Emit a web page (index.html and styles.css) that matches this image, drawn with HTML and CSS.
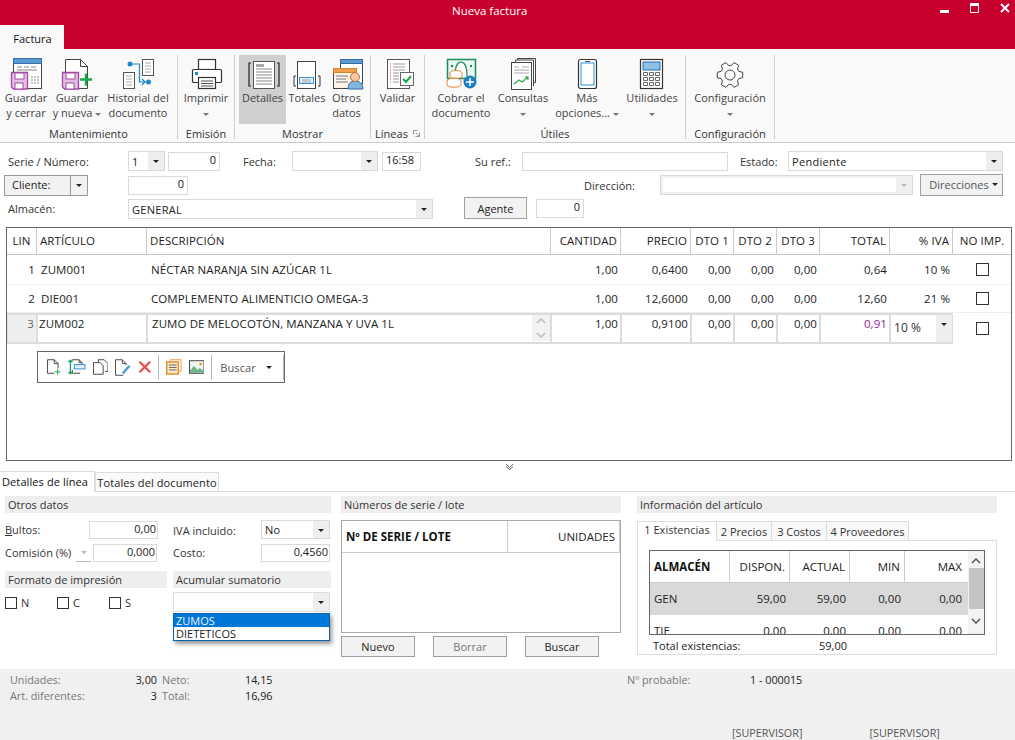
FILE: index.html
```html
<!DOCTYPE html>
<html lang="es">
<head>
<meta charset="utf-8">
<title>Nueva factura</title>
<link rel="stylesheet" href="styles.css">
</head>
<body>
<div class="app">
  <header class="titlebar">
    <span class="wintitle">Nueva factura</span>
    <div class="winctl">
      <svg width="10" height="10" viewBox="0 0 10 10"><rect x="0" y="7" width="9" height="3" fill="#fff"/></svg>
      <svg width="10" height="10" viewBox="0 0 10 10"><path d="M.5.500h8v9h-8z" fill="none" stroke="#fff"/><rect x="0" y="0" width="9" height="3" fill="#fff"/></svg>
      <svg width="10" height="10" viewBox="0 0 10 10"><path d="M1 1l8 8M9 1l-8 8" stroke="#fff" stroke-width="2"/></svg>
    </div>
  </header>
  <div class="tabstrip"><div class="apptab">Factura</div></div>

  <div class="ribbon">
    <section class="group g1">
      <div class="btns">
        <div class="rb w52">
          <svg class="ic" viewBox="0 0 34 34"><rect x="4.500" y="1.500" width="28" height="30" fill="#fff" stroke="#444"/><rect x="4.500" y="1.500" width="28" height="5" fill="#5b9bd5" stroke="#3a6ea5"/><path d="M8 10h5m2 0h5m2 0h5M8 13h20" stroke="#888"/><path d="M22 20h8m-8 3h8m-8 3h8" stroke="#888" stroke-dasharray="2 1"/><path d="M2.500 15.500h16v16.500h-14l-2-2z" fill="#e3bfe0" stroke="#a24aa5" stroke-width="1.300"/><rect x="6" y="16" width="9" height="6" fill="#fff" stroke="#a24aa5"/><rect x="6" y="26" width="8" height="6" fill="#fff" stroke="#a24aa5"/></svg>
          <span class="lb">Guardar<br>y cerrar</span>
        </div>
        <div class="rb w50">
          <svg class="ic" viewBox="0 0 34 34"><path d="M5.500 2.500h15l7 7v22h-22z" fill="#fff" stroke="#444"/><path d="M20.500 2.500v7h7" fill="none" stroke="#444"/><path d="M2.500 15.500h16v16.500h-14l-2-2z" fill="#e3bfe0" stroke="#a24aa5" stroke-width="1.300"/><rect x="6" y="16" width="9" height="6" fill="#fff" stroke="#a24aa5"/><rect x="6" y="26" width="8" height="6" fill="#fff" stroke="#a24aa5"/><path d="M26 16.500v12M20 22.500h12" stroke="#1aa84f" stroke-width="2.500"/></svg>
          <span class="lb">Guardar<br>y nueva <i class="arr"></i></span>
        </div>
        <div class="rb w72">
          <svg class="ic" viewBox="0 0 34 34"><rect x="21.500" y="2.500" width="11" height="16" fill="#fff" stroke="#555"/><path d="M24 6h6m-6 3h6m-6 3h6m-6 3h6" stroke="#aaa"/><rect x="2.500" y="15.500" width="11" height="16" fill="#fff" stroke="#555"/><path d="M5 19h6m-6 3h6m-6 3h6m-6 3h6" stroke="#aaa"/><circle cx="9" cy="7" r="2.500" fill="#1c87c9"/><path d="M9 7h9.500v18h9M21 22l3 3-3 3" fill="none" stroke="#1c87c9" stroke-width="1.200"/><circle cx="27.500" cy="25" r="2.500" fill="#1c87c9"/></svg>
          <span class="lb">Historial del<br>documento</span>
        </div>
      </div>
      <div class="gl">Mantenimiento</div>
    </section>
    <section class="group g2">
      <div class="btns">
        <div class="rb w55">
          <svg class="ic" viewBox="0 0 34 34"><rect x="9.500" y="2.500" width="17" height="10" fill="#fff" stroke="#333" stroke-width="1.200"/><rect x="3.500" y="12.500" width="29" height="13" rx="1" fill="#fff" stroke="#333" stroke-width="1.200"/><rect x="6" y="15" width="3" height="3" fill="#1c87c9"/><rect x="9.500" y="20.500" width="17" height="11" fill="#fff" stroke="#333" stroke-width="1.200"/><path d="M12 24h12m-12 2.500h12m-12 2.500h12" stroke="#555"/></svg>
          <span class="lb">Imprimir<br><i class="arr"></i></span>
        </div>
      </div>
      <div class="gl">Emisión</div>
    </section>
    <section class="group g3">
      <div class="btns">
        <div class="rb w47 on">
          <svg class="ic" viewBox="0 0 34 34"><rect x="7.500" y="4.500" width="21" height="27" fill="#fff" stroke="#555"/><rect x="10" y="7" width="8" height="3" fill="#aaa"/><path d="M10 12h16m-16 3h16m-16 3h16m-16 3h16m-16 3h16m-16 3h16" stroke="#888"/><path d="M5 6H3v23h2M31 6h2v23h-2" fill="none" stroke="#222" stroke-width="1.200"/></svg>
          <span class="lb">Detalles</span>
        </div>
        <div class="rb w42">
          <svg class="ic" viewBox="0 0 34 34"><rect x="7.500" y="4.500" width="18" height="27" fill="#fff" stroke="#444"/><rect x="9.500" y="20.500" width="14" height="6" fill="#e3f0fa" stroke="#3a94d0"/><path d="M12 23h9m-9 2h9" stroke="#888" stroke-width=".7"/><path d="M6 19H4v10h2M28 19h2v10h-2" fill="none" stroke="#333"/></svg>
          <span class="lb">Totales</span>
        </div>
        <div class="rb w37">
          <svg class="ic" viewBox="0 0 34 34"><rect x="10.500" y="2.500" width="22" height="24" fill="#fff" stroke="#444"/><rect x="10.500" y="2.500" width="22" height="4" fill="#5b9bd5" stroke="#3a6ea5"/><rect x="3.500" y="11.500" width="23" height="20" fill="#fdf3e6" stroke="#444"/><rect x="3.500" y="11.500" width="23" height="4" fill="#f0a04b" stroke="#d98430"/><path d="M6 19h12M6 22h10M6 25h12" stroke="#777"/><path d="M18 32c0-6 3-8 7-8s8 2 8 8z" fill="#7fb5de" stroke="#3a6ea5"/><circle cx="25" cy="20" r="4.500" fill="#f6c6a0" stroke="#b5733e"/></svg>
          <span class="lb">Otros<br>datos</span>
        </div>
      </div>
      <div class="gl">Mostrar</div>
    </section>
    <section class="group g4">
      <div class="btns">
        <div class="rb w53">
          <svg class="ic" viewBox="0 0 34 34"><rect x="6.500" y="2.500" width="22" height="29" fill="#fff" stroke="#555"/><path d="M12 7h12m-12 3h12m-12 3h12m-12 3h6m-6 3h6m-6 3h6m-6 3h6" stroke="#999"/><path d="M9 7h1m-1 3h1m-1 3h1m-1 3h1m-1 3h1m-1 3h1m-1 3h1" stroke="#c33"/><rect x="19.500" y="15.500" width="13" height="13" fill="#fff" stroke="#666"/><path d="M22 22l3 3 5-6" fill="none" stroke="#1aa84f" stroke-width="2"/></svg>
          <span class="lb">Validar</span>
        </div>
      </div>
      <div class="gl gl-launch">Líneas <svg width="7" height="7" viewBox="0 0 7 7"><path d="M.5.500h4M.5.500v4M6.500 2.500v4h-4M3 3l3 3" fill="none" stroke="#999"/></svg></div>
    </section>
    <section class="group g5">
      <div class="btns">
        <div class="rb w60">
          <svg class="ic" viewBox="0 0 34 34"><rect x="3.500" y="2.500" width="28" height="19" fill="#eaf6ef" stroke="#1b8f55" stroke-width="1.500"/><path d="M11 19c0-10 3-14 6-14s6 4 6 14" fill="#fff" stroke="#1b8f55" stroke-width="1.200"/><circle cx="8" cy="9" r="1.200" fill="#1b8f55"/><circle cx="27" cy="9" r="1.200" fill="#1b8f55"/><ellipse cx="12" cy="16" rx="6" ry="2.500" fill="#fff" stroke="#e8873a"/><path d="M6 16v4c0 1.500 12 1.500 12 0v-4" fill="#fff" stroke="#e8873a"/><ellipse cx="10" cy="24" rx="7" ry="2.800" fill="#fff" stroke="#e8873a"/><path d="M3 24v4c0 3 14 3 14 0v-4" fill="#fff" stroke="#e8873a"/><circle cx="26" cy="25" r="6.500" fill="#1c7fc4"/><path d="M26 21v8M22 25h8" stroke="#fff" stroke-width="1.500"/></svg>
          <span class="lb">Cobrar el<br>documento</span>
        </div>
        <div class="rb w64">
          <svg class="ic" viewBox="0 0 34 34"><path d="M11.500 4V1.500h18v24H27" fill="#fff" stroke="#444"/><path d="M9.500 5V3h18v26" fill="#fff" stroke="#444"/><rect x="5.500" y="5.500" width="20" height="27" fill="#fff" stroke="#444"/><path d="M8 10h5m3 0h7M8 13h15m-15 3h15" stroke="#aaa"/><path d="M8 27l5-4 3 2 6-5m-3 0h3v3" fill="none" stroke="#2ca94f" stroke-width="1.200"/></svg>
          <span class="lb">Consultas<br><i class="arr"></i></span>
        </div>
        <div class="rb w64">
          <svg class="ic" viewBox="0 0 34 34"><rect x="8.500" y="2.500" width="18" height="29" rx="2" fill="#fff" stroke="#333" stroke-width="1.200"/><rect x="11" y="6" width="13" height="22" fill="#fff" stroke="#2b8fd3"/><path d="M15 4.500h5" stroke="#555"/></svg>
          <span class="lb">Más<br>opciones... <i class="arr"></i></span>
        </div>
        <div class="rb w66">
          <svg class="ic" viewBox="0 0 34 34"><rect x="5.500" y="2.500" width="22" height="29" fill="#fff" stroke="#333" stroke-width="1.200"/><rect x="8" y="5" width="17" height="8" fill="#8ec1ea" stroke="#2b6ea3"/><path d="M8.500 15.500h4v3h-4zm6 0h4v3h-4zm6 0h4v3h-4zm-12 5h4v3h-4zm6 0h4v3h-4zm6 0h4v3h-4zm-12 5h4v3h-4zm6 0h4v3h-4zm6 0h4v3h-4z" fill="none" stroke="#666"/></svg>
          <span class="lb">Utilidades<br><i class="arr"></i></span>
        </div>
      </div>
      <div class="gl">Útiles</div>
    </section>
    <section class="group g6">
      <div class="btns">
        <div class="rb w88">
          <svg class="ic" viewBox="0 0 34 34"><path d="M25.800 14.400L29.700 15.300V20.700L25.800 21.600L24.500 23.800L25.700 27.700L21 30.400L18.300 27.400H15.700L13 30.400L8.300 27.700L9.500 23.800L8.200 21.600L4.300 20.700V15.300L8.200 14.400L9.500 12.200L8.300 8.300L13 5.600L15.700 8.600H18.300L21 5.600L25.700 8.300L24.500 12.200Z" fill="#fff" stroke="#444" stroke-linejoin="round"/><circle cx="17" cy="18" r="5" fill="#fff" stroke="#444"/></svg>
          <span class="lb">Configuración<br><i class="arr"></i></span>
        </div>
      </div>
      <div class="gl">Configuración</div>
    </section>
  </div>

  <form class="form">
    <div class="frow r1">
      <label>Serie / Número:</label>
      <div class="combo w37f"><span>1</span><b></b></div>
      <div class="inp w52f num">0</div>
      <label>Fecha:</label>
      <div class="combo w86f"><span></span><b></b></div>
      <div class="inp w39f">16:58</div>
      <label>Su ref.:</label>
      <div class="inp w206f"></div>
      <label>Estado:</label>
      <div class="combo w215f"><span>Pendiente</span><b></b></div>
    </div>
    <div class="frow r2">
      <div class="split"><span>Cliente:</span><b></b></div>
      <div class="inp w60f num">0</div>
      <label>Dirección:</label>
      <div class="combo w253f off"><span></span><b></b></div>
      <div class="btn dirs">Direcciones <i class="arr dark"></i></div>
    </div>
    <div class="frow r3">
      <label>Almacén:</label>
      <div class="combo w305f"><span>GENERAL</span><b></b></div>
      <div class="btn agente">Agente</div>
      <div class="inp w48f num">0</div>
    </div>
  </form>

  <div class="lines">
    <div class="tr th">
      <div class="tc ctr">LIN</div><div class="tc">ARTÍCULO</div><div class="tc">DESCRIPCIÓN</div><div class="tc num">CANTIDAD</div><div class="tc num">PRECIO</div><div class="tc ctr">DTO 1</div><div class="tc ctr">DTO 2</div><div class="tc ctr">DTO 3</div><div class="tc num">TOTAL</div><div class="tc num">% IVA</div><div class="tc ctr">NO IMP.</div>
    </div>
    <div class="tr td h1">
      <div class="tc num">1</div><div class="tc">ZUM001</div><div class="tc">NÉCTAR NARANJA SIN AZÚCAR 1L</div><div class="tc num">1,00</div><div class="tc num">0,6400</div><div class="tc num">0,00</div><div class="tc num">0,00</div><div class="tc num">0,00</div><div class="tc num">0,64</div><div class="tc num iv">10 %</div><div class="tc ctr"><i class="chk"></i></div>
    </div>
    <div class="tr td h2">
      <div class="tc num">2</div><div class="tc">DIE001</div><div class="tc">COMPLEMENTO ALIMENTICIO OMEGA-3</div><div class="tc num">1,00</div><div class="tc num">12,6000</div><div class="tc num">0,00</div><div class="tc num">0,00</div><div class="tc num">0,00</div><div class="tc num">12,60</div><div class="tc num iv">21 %</div><div class="tc ctr"><i class="chk"></i></div>
    </div>
    <div class="tr ed">
      <div class="tc num lin">3</div><div class="tc">ZUM002</div>
      <div class="tc descr"><span>ZUMO DE MELOCOTÓN, MANZANA Y UVA 1L</span><span class="spin"><svg width="10" height="24" viewBox="0 0 10 24"><path d="M1 7l4-4 4 4M1 17l4 4 4-4" fill="none" stroke="#bbb" stroke-width="1.500"/></svg></span></div>
      <div class="tc num">1,00</div><div class="tc num">0,9100</div><div class="tc num">0,00</div><div class="tc num">0,00</div><div class="tc num">0,00</div><div class="tc num purple">0,91</div>
      <div class="tc ivacombo"><span>10 %</span><b></b></div>
      <div class="tc ctr plain"><i class="chk"></i></div>
    </div>
    <div class="floatbar">
      <svg width="16" height="18" viewBox="0 0 16 18"><path d="M1.500 1.500h7l4 4v5M8.500 1.500v4h4M1.500 1.500v14h7" fill="none" stroke="#444"/><path d="M12 11v6M9 14h6" stroke="#1aa84f"/></svg>
      <svg width="18" height="18" viewBox="0 0 18 18"><path d="M4.500 2.500V1.500h7l3 3v2M11.500 1.500v3h3M4.500 12v3.500h8" fill="none" stroke="#444"/><rect x="6.500" y="6.500" width="11" height="4.500" fill="#e3f0fa" stroke="#2b8fd3"/><path d="M2.500 2v14M.5 4l2-2 2 2M.5 14l2 2 2-2" fill="none" stroke="#0f9d58" stroke-width="1.300"/></svg>
      <svg width="16" height="16" viewBox="0 0 16 16"><path d="M5.500 3V.5h6l4 4v8h-3" fill="none" stroke="#444"/><path d="M.5 3.500h7l3 3v9h-10z" fill="#fff" stroke="#444"/></svg>
      <svg width="16" height="17" viewBox="0 0 16 17"><path d="M11.500 6V4.500l-4-4h-7v16h8M7.500.5v4h4" fill="none" stroke="#444"/><path d="M7 14l7-8 2 1.500L9 15.500z" fill="#4c9edb"/></svg>
      <svg width="14" height="14" viewBox="0 0 14 14"><path d="M1.500 1.500l11 11m0-11l-11 11" stroke="#ea4a46" stroke-width="2.200"/></svg>
      <i class="vsep"></i>
      <svg width="16" height="16" viewBox="0 0 16 16"><path d="M4.500 2.500V.5h11v12h-2" fill="none" stroke="#ef9a38"/><rect x=".75" y="2.750" width="12" height="12.500" fill="#fdeecb" stroke="#e88a2a" stroke-width="1.500"/><path d="M3 6h8M3 8.500h8M3 11h8" stroke="#666"/></svg>
      <svg width="16" height="14" viewBox="0 0 16 14"><rect x=".5" y=".5" width="15" height="13" fill="#eef5ee" stroke="#444"/><path d="M1 11l4-5 4 4 2-2 4 3v2H1z" fill="#6db38a"/><circle cx="12" cy="4" r="1.500" fill="#ef8f3a"/></svg>
      <i class="vsep"></i>
      <span class="fb-search">Buscar</span><i class="arr dark"></i>
      <i class="vsep end"></i>
    </div>
  </div>

  <div class="splitter"><svg width="9" height="7" viewBox="0 0 9 7"><path d="M1 1l3.500 3.500L8 1M1 3.500l3.500 3L8 3.500" fill="none" stroke="#666"/></svg></div>

  <div class="dtabs">
    <div class="dtab active">Detalles de línea</div>
    <div class="dtab">Totales del documento</div>
  </div>

  <div class="panels">
    <div class="col c1">
      <div class="sec">Otros datos</div>
      <div class="pr pr1">
        <label><u>B</u>ultos:</label>
        <div class="inp w69f num">0,00</div>
        <label>IVA incluido:</label>
        <div class="combo w69f"><span>No</span><b></b></div>
      </div>
      <div class="pr pr2">
        <label>Comisión (%)</label>
        <div class="minispin"><i class="arr light"></i></div>
        <div class="inp w64f num">0,000</div>
        <label>Costo:</label>
        <div class="inp w69f num">0,4560</div>
      </div>
      <div class="lower">
        <div class="lc">
          <div class="sec">Formato de impresión</div>
          <div class="checks">
            <span class="ck"><i class="chk"></i>N</span>
            <span class="ck"><i class="chk"></i>C</span>
            <span class="ck"><i class="chk"></i>S</span>
          </div>
        </div>
        <div class="rc">
          <div class="sec">Acumular sumatorio</div>
          <div class="ddwrap">
            <div class="combo w157f ddcombo"><span></span><b></b></div>
            <div class="ddlist"><div class="sel">ZUMOS</div><div>DIETETICOS</div></div>
          </div>
        </div>
      </div>
    </div>

    <div class="col c2">
      <div class="sec">Números de serie / lote</div>
      <div class="lote">
        <div class="lote-h"><div class="lh1">Nº DE SERIE / LOTE</div><div class="lh2">UNIDADES</div></div>
      </div>
      <div class="lbtns">
        <div class="btn lb1">Nuevo</div>
        <div class="btn lb1 dim">Borrar</div>
        <div class="btn lb1">Buscar</div>
      </div>
    </div>

    <div class="col c3">
      <div class="sec">Información del artículo</div>
      <div class="itabs">
        <div class="itab active">1 Existencias</div>
        <div class="itab t2">2 Precios</div>
        <div class="itab t2">3 Costos</div>
        <div class="itab t3">4 Proveedores</div>
      </div>
      <div class="ibox">
        <div class="stock">
          <div class="sgrid">
            <div class="sr sh"><div class="bold">ALMACÉN</div><div>DISPON.</div><div>ACTUAL</div><div>MIN</div><div>MAX</div></div>
            <div class="sr sel"><div class="lft">GEN</div><div>59,00</div><div>59,00</div><div>0,00</div><div>0,00</div></div>
            <div class="sr last"><div class="lft">TIE</div><div>0,00</div><div>0,00</div><div>0,00</div><div>0,00</div></div>
          </div>
          <div class="sbar">
            <svg width="10" height="6" viewBox="0 0 10 6"><path d="M1 5l4-4 4 4" fill="none" stroke="#555" stroke-width="1.500"/></svg>
            <div class="thumb"></div>
            <svg width="10" height="6" viewBox="0 0 10 6"><path d="M1 1l4 4 4-4" fill="none" stroke="#555" stroke-width="1.500"/></svg>
          </div>
        </div>
        <div class="stotal"><span>Total existencias:</span><span>59,00</span></div>
      </div>
    </div>
  </div>

  <footer class="status">
    <div class="sgrid2">
      <span class="m">Unidades:</span><span class="v r">3,00</span><span class="m">Neto:</span><span class="v">14,15</span><span class="m">Nº probable:</span><span class="v">1 - 000015</span>
      <span class="m">Art. diferentes:</span><span class="v r">3</span><span class="m">Total:</span><span class="v">16,96</span><span></span><span></span>
    </div>
    <div class="users"><span>[SUPERVISOR]</span><span>[SUPERVISOR]</span></div>
  </footer>
</div>
</body>
</html>
```

FILE: styles.css
```css
* { box-sizing: border-box; }
html, body { margin: 0; padding: 0; }
body { width: 1015px; height: 740px; overflow: hidden; background: #fff; font-family: "Open Sans", "Noto Sans", sans-serif; font-size: 11px; color: #333; }
.app { width: 1015px; height: 740px; display: flex; flex-direction: column; position: relative; overflow: hidden; }
i { display: inline-block; font-style: normal; }

.titlebar { height: 25px; background: #c8002d; color: #fff; display: flex; align-items: flex-start; flex: none; padding: 3px 0 0 452px; }
.wintitle { font-size: 11.5px; line-height: 16px; }
.winctl { margin-left: auto; display: flex; gap: 20px; align-items: flex-start; padding-right: 5px; }
.tabstrip { height: 24px; background: #c8002d; flex: none; display: flex; align-items: flex-end; }
.apptab { width: 64px; height: 24px; padding-top: 2px; padding-left: 1px; background: #f9f9f9; color: #111; font-size: 11px; display: flex; align-items: center; justify-content: center; }

.ribbon { height: 94px; flex: none; background: #f9f9f9; border-bottom: 1px solid #ccc; display: flex; padding-top: 6px; padding-bottom: 3px; }
.group { display: flex; flex-direction: column; border-right: 1px solid #d0d0d0; height: 84px; }
.g1 { width: 178px; }
.g2 { width: 57px; }
.g3 { width: 136px; padding-left: 4px; }
.g4 { width: 54px; }
.g5 { width: 261px; padding-left: 6px; }
.g6 { width: 89px; }
.btns { display: flex; height: 69px; }
.rb { display: flex; flex-direction: column; align-items: center; height: 69px; padding-top: 2px; color: #444; flex: none; }
.rb.on { background: #cfcfcf; }
.ic { width: 34px; height: 34px; flex: none; }
.lb { display: block; text-align: center; line-height: 15px; margin-top: -1px; white-space: nowrap; font-size: 11px; }
.w52 { width: 52px; } .w50 { width: 50px; } .w72 { width: 72px; } .w55 { width: 56px; }
.w47 { width: 47px; } .w42 { width: 42px; } .w37 { width: 37px; } .w53 { width: 53px; }
.w60 { width: 60px; } .w64 { width: 64px; } .w66 { width: 66px; } .w88 { width: 88px; }
.gl { text-align: center; line-height: 15px; margin-top: 2px; color: #333; }
.g3 .gl { margin-left: -4px; }
.g5 .gl { margin-left: -6px; }
.gl-launch { display: flex; justify-content: center; align-items: center; gap: 5px; }
.arr { width: 0; height: 0; border-left: 3.500px solid transparent; border-right: 3.500px solid transparent; border-top: 3.500px solid #777; vertical-align: middle; }
.arr.dark { border-top-color: #222; }
.arr.light { border-top-color: #bbb; }

.form { height: 84px; flex: none; padding-top: 8px; display: flex; flex-direction: column; }
.frow { display: grid; align-items: center; }
.frow label { color: #333; }
.r1 { height: 20px; padding-left: 8px; grid-template-columns: 120px 40px 75px 49px 90px 93px 47px 218px 48px 1fr; }
.r2 { height: 21px; margin-top: 3px; padding-left: 4px; grid-template-columns: 124px 456px 76px 260px 1fr; }
.r3 { height: 22px; margin-top: 2px; padding-left: 8px; grid-template-columns: 120px 336px 72px 1fr; }
.r3 label { margin-top: 1px; }
.r3 .combo { align-self: end; }
.r3 .inp { margin-top: 1px; }
.inp { height: 19px; border: 1px solid #d9d9d9; background: #fff; padding: 0 3px; line-height: 14px; white-space: nowrap; color: #222; }
.num { text-align: right; }
.combo { height: 20px; border: 1px solid #d9d9d9; background: #fff; display: flex; }
.combo span { flex: 1; padding-left: 3px; line-height: 19px; color: #222; overflow: hidden; letter-spacing: .3px; }
.combo b, .split b, .ivacombo b { width: 16px; background: #eee; position: relative; flex: none; }
.combo b::after, .split b::after, .ivacombo b::after { content: ""; position: absolute; left: 5px; top: 8px; border-left: 3px solid transparent; border-right: 3px solid transparent; border-top: 3px solid #222; }
.combo.off { background: #f0f0f0; padding: 2px 0 2px 2px; }
.combo.off span { background: #fff; }
.combo.off b { background: #f0f0f0; }
.combo.off b::after { border-top-color: #bbb; top: 6px; }
.w37f { width: 37px; } .w52f { width: 52px; } .w86f { width: 86px; } .w39f { width: 39px; } .w206f { width: 206px; }
.w215f { width: 215px; } .w60f { width: 60px; } .w253f { width: 253px; } .w305f { width: 305px; } .w48f { width: 48px; }
.w69f { width: 69px; } .w64f { width: 64px; } .w157f { width: 157px; }
.split { width: 84px; height: 21px; border: 1px solid #999; background: #f2f2f2; display: flex; }
.split span { flex: 1; padding-left: 7px; line-height: 17px; border-right: 1px solid #999; color: #222; }
.split b { background: #f2f2f2; }
.btn { border: 1px solid #a0a0a0; background: #f2f2f2; display: flex; align-items: center; justify-content: center; color: #222; }
.dirs { width: 83px; height: 22px; gap: 3px; color: #555; padding: 0 0 2px 4px; }
.agente { width: 63px; height: 22px; }

.lines { height: 234px; flex: none; margin: 0 3px 0 6px; border: 1px solid #666; position: relative; font-size: 11.5px; letter-spacing: .08px; }
.tr { display: grid; grid-template-columns: 30px 110px 404px 70px 70px 43px 43px 43px 70px 63px 58px; }
.tc { padding: 0 3px; white-space: nowrap; }
.ctr { text-align: center; }
.th { height: 27px; border-bottom: 1px solid #c4c4c4; line-height: 26px; color: #222; }
.th .tc { border-right: 1px solid #ccc; }
.th .tc:last-child { border-right: 0; }
.td .tc { color: #222; }
.h1 { height: 30px; line-height: 29px; border-bottom: 1px solid #f0f0f0; }
.h2 { height: 28px; line-height: 27px; border-bottom: 1px solid #eee; }
.td .tc:nth-child(1) { padding-right: 2px; }
.td .tc:nth-child(2), .td .tc:nth-child(3) { padding-left: 4px; }
.td .iv { padding-right: 3px; }
.chk { width: 13px; height: 13px; border: 1px solid #333; background: #fff; vertical-align: middle; }
.td .chk { margin-top: -3px; }
.ed { height: 29px; background: #eee; }
.ed .tc { background: #fff; border: 2px solid #dcdcdc; border-left-width: 1px; border-right-width: 1px; line-height: 16px; color: #222; padding: 1px 2px; }
.ed .lin { background: #eee; color: #666; padding-right: 2px; }
.ed .tc:nth-child(2) { padding-left: 1px; }
.ed .descr { display: flex; justify-content: space-between; padding: 1px 0 1px 4px; }
.ed .descr .spin { width: 18px; margin-top: -1px; height: 26px; background: #f2f2f2; display: flex; align-items: center; justify-content: center; flex: none; }
.purple { color: #8e1f96 !important; }
.ed .ivacombo { display: flex; padding: 0; }
.ed .ivacombo span { flex: 1; padding: 5px 0 0 3px; color: #333; font-size: 12px; }
.ed .plain { background: #fff; border: 0; padding-top: 8px; line-height: 13px; }
.floatbar { position: absolute; left: 30px; top: 123px; width: 248px; height: 32px; border: 1px solid #666; background: #fff; display: flex; align-items: center; gap: 7px; padding-left: 8px; }
.vsep { width: 1px; height: 25px; background: #bbb; }
.fb-search { margin-left: 1px; color: #555; width: 39px; font-size: 11px; }
.floatbar .arr { margin: 0 4px 0 1px; }

.splitter { height: 10px; flex: none; display: flex; justify-content: center; align-items: center; margin-left: 3px; }
.dtabs { height: 21px; flex: none; display: flex; align-items: flex-end; border-bottom: 1px solid #ddd; position: relative; }
.dtab { height: 19px; border: 1px solid #ddd; border-bottom: 0; background: #fafafa; font-size: 11px; line-height: 18px; color: #222; width: 124px; text-align: center; white-space: nowrap; letter-spacing: .1px; padding-top: 1px; }
.dtab.active { height: 21px; width: 95px; margin-bottom: -1px; background: #fff; border-left: 0; padding: 0 0 0 2px; text-align: left; line-height: 19px; color: #111; }
.panels { height: 177px; flex: none; display: flex; padding: 4px 0 0 5px; }
.col { display: flex; flex-direction: column; }
.c1 { width: 326px; }
.c2 { width: 280px; margin-left: 10px; }
.c3 { width: 360px; margin-left: 16px; }
.sec { height: 17px; background: #eee; padding-left: 3px; line-height: 17px; color: #333; flex: none; }
.pr { display: grid; align-items: center; height: 18px; }
.pr1 { margin-top: 7px; grid-template-columns: 84px 84px 88px 1fr; }
.pr2 { margin-top: 6px; grid-template-columns: 71px 17px 80px 88px 1fr; }
.pr label { white-space: nowrap; color: #333; }
.pr1 label:nth-of-type(2) { margin-top: 2px; }
.pr2 label { margin-top: -2px; }
.pr .inp { height: 18px; line-height: 14px; padding: 0 1px 0 0; }
.pr .combo { height: 19px; }
.pr .combo span { line-height: 18px; }
.minispin { width: 15px; height: 18px; border-bottom: 1px solid #bbb; display: flex; align-items: center; justify-content: center; }
.lower { display: flex; gap: 6px; margin-top: 9px; }
.lc { width: 162px; }
.rc { width: 158px; }
.checks { display: flex; padding-top: 7px; }
.ck { width: 52px; display: flex; align-items: center; gap: 4px; color: #333; }
.ck .chk { width: 12px; height: 12px; }
.ddwrap { position: relative; padding-top: 4px; }
.ddcombo { border-color: #ddd; }
.ddlist { position: absolute; left: 0; top: 25px; width: 157px; height: 28px; background: #fff; border: 1px solid #0a64ad; box-shadow: 2px 3px 4px rgba(0,0,0,.4); line-height: 13px; color: #222; font-size: 11px; }
.ddlist div { padding-left: 2px; }
.ddlist .sel { background: #0078d7; color: #e8f2fb; }

.lote { height: 113px; margin-top: 7px; border: 1px solid #aaa; flex: none; }
.lote-h { display: flex; height: 32px; border-bottom: 1px solid #ccc; border-right: 1px solid #ccc; line-height: 31px; font-size: 11.5px; }
.lh1 { width: 166px; padding-left: 4px; font-weight: 700; color: #111; border-right: 1px solid #ccc; }
.lh2 { flex: 1; text-align: right; padding-right: 4px; color: #222; }
.lbtns { display: flex; gap: 18px; margin-top: 3px; }
.lb1 { width: 74px; height: 21px; }
.dim { color: #777; }

.itabs { display: flex; margin-top: 8px; height: 19px; align-items: flex-end; }
.itab { height: 19px; border: 1px solid #ddd; border-bottom: 0; border-left: 0; background: #f8f8f8; font-size: 11px; line-height: 16px; text-align: center; color: #333; padding-top: 2px; }
.itab.active { width: 80px; height: 20px; background: #fff; margin-bottom: -1px; border-left: 1px solid #ddd; padding-top: 0; position: relative; }
.t2 { width: 55px; } .t3 { width: 82px; }
.ibox { height: 115px; border: 1px solid #ddd; padding: 9px 11px 0; flex: none; }
.stock { display: flex; height: 85px; border: 1px solid #666; overflow: hidden; width: 336px; }
.sgrid { width: 318px; height: 83px; overflow: hidden; }
.sr { display: grid; grid-template-columns: 80px 60px 60px 55px 63px; height: 32px; line-height: 31px; font-size: 11.5px; }
.sr div { text-align: right; padding-right: 4px; color: #222; }
.sr div:last-child { padding-right: 6px; }
.sr .lft, .sr .bold { text-align: left; padding-left: 4px; }
.sr .bold { font-weight: 700; color: #111; }
.sh div { border-right: 1px solid #ccc; border-bottom: 1px solid #ccc; }
.sh div:last-child { border-right: 0; }
.sr.sel { background: #d9d9d9; }
.sr.last { height: 19px; overflow: hidden; }
.sbar { width: 16px; display: flex; flex-direction: column; align-items: center; background: #f3f3f3; padding-top: 7px; }
.thumb { width: 15px; height: 41px; background: #c4c4c4; margin: 4px 0 9px; }
.stotal { display: grid; grid-template-columns: 160px 34px; padding-left: 4px; margin-top: 3px; color: #222; line-height: 15px; }
.stotal span:last-child { text-align: right; }
.status { flex: 1; background: #f0f0f0; font-size: 10.8px; padding: 3px 0 0 10px; display: flex; flex-direction: column; color: #444; }
.sgrid2 { display: grid; grid-template-columns: 100px 47px 88px 382px 123px 100px; line-height: 16px; }
.sgrid2 .m { color: #777; }
.sgrid2 .m:nth-child(3), .sgrid2 .m:nth-child(9) { padding-left: 5px; }
.sgrid2 .v { color: #222; }
.sgrid2 .r { text-align: right; }
.users { display: flex; gap: 67px; padding-left: 722px; margin-top: 21px; color: #555; }
```
